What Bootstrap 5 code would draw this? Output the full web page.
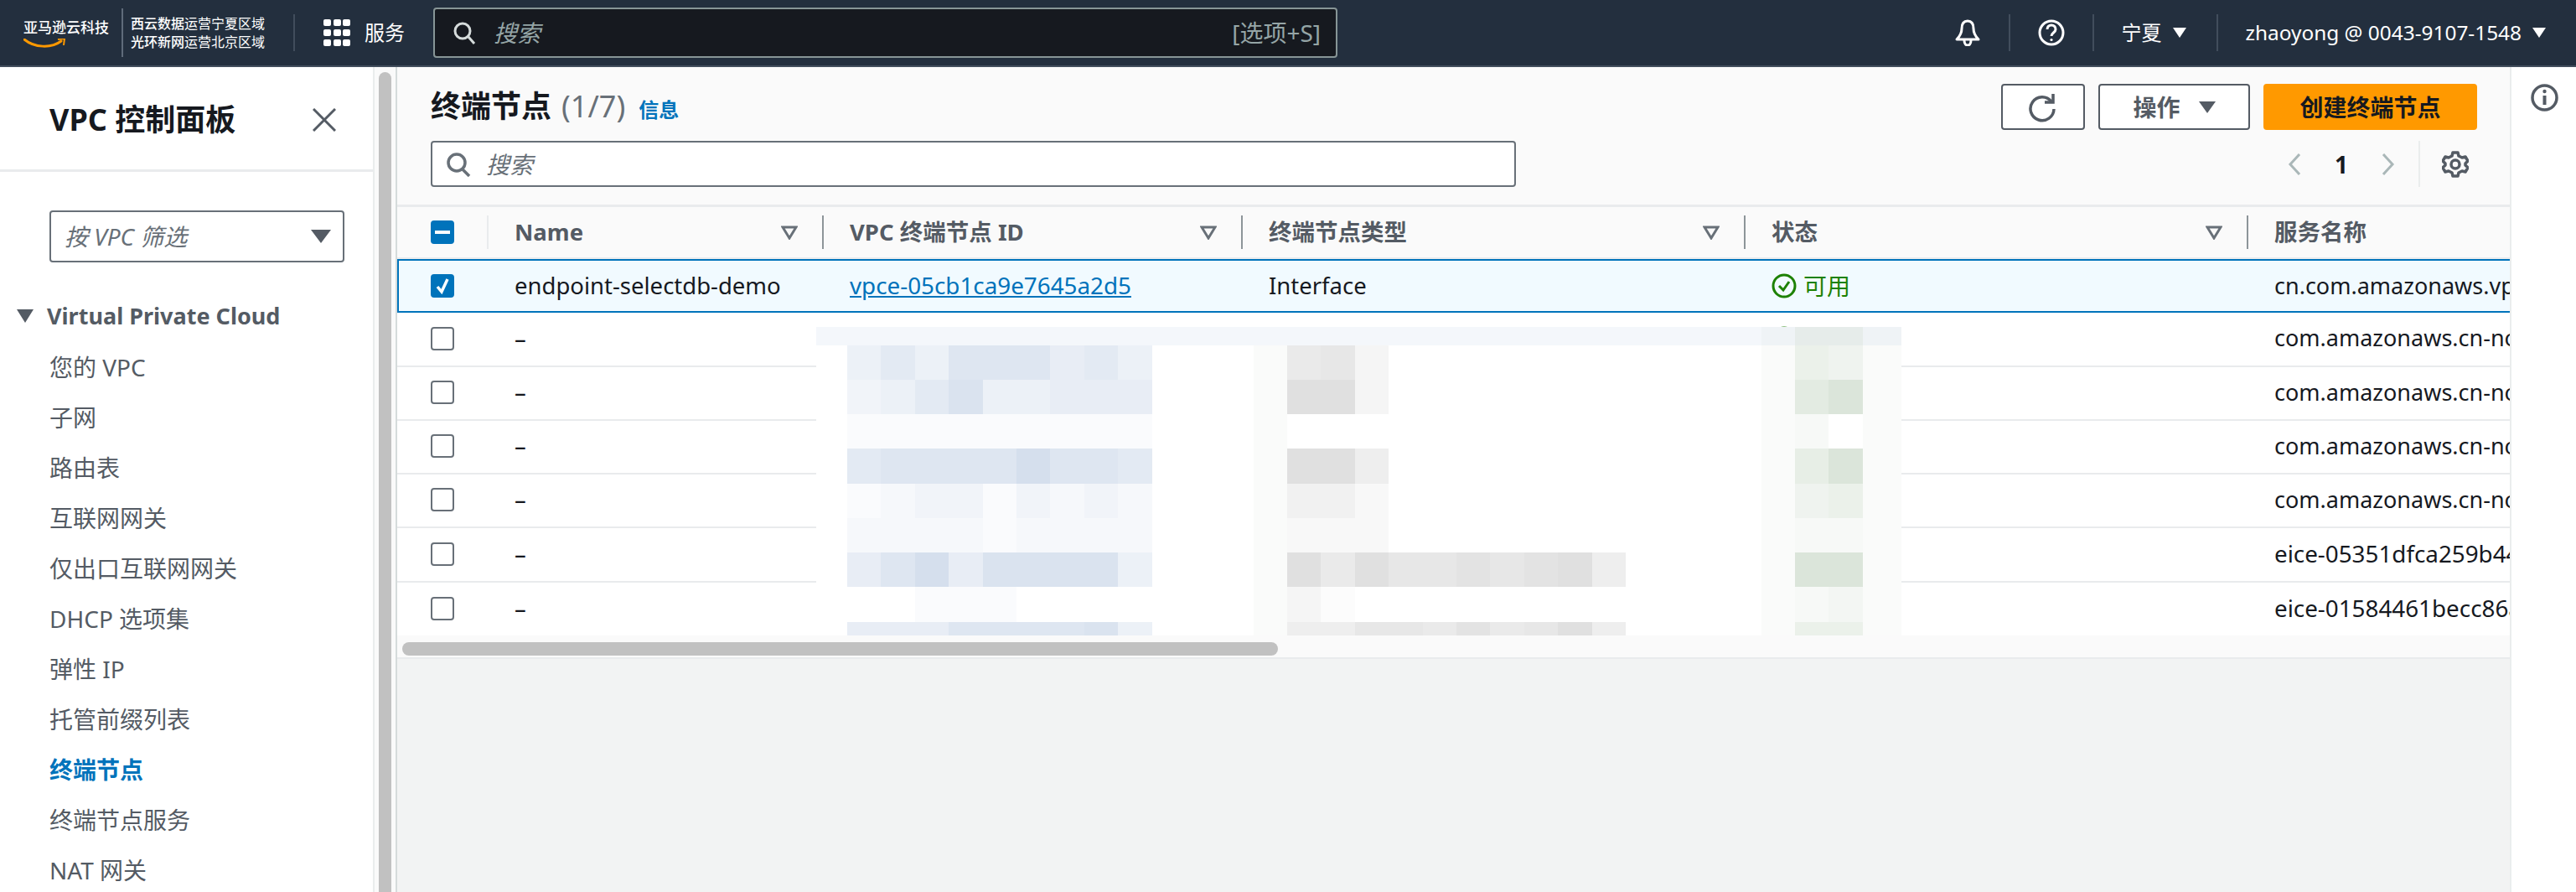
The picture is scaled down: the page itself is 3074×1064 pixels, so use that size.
<!DOCTYPE html>
<html lang="zh">
<head>
  <meta charset="UTF-8" />
  <title>终端节点 | VPC 控制台</title>
  <link href="https://cdn.jsdelivr.net/npm/bootstrap@5.3.0/dist/css/bootstrap.min.css" rel="stylesheet">
  <style>
    html, body { height: 100%; }
    body { width: 3074px; height: 1064px; overflow: hidden; background: #fff; color: #16191f; font-family: "Noto Sans", "Noto Sans CJK SC", sans-serif; font-size: 28px; }

    /* top bar */
    .top-bar { height: 80px; padding: 0; background: #232f3e; border-bottom: 2px solid #414d5c; color: #fff; flex-wrap: nowrap; justify-content: flex-start; }
    .logo-box { width: 145px; padding-left: 28px; margin-top: 2px; }
    .logo-name { font-size: 17px; line-height: 20px; font-weight: 500; white-space: nowrap; }
    .logo-smile { display: block; width: 50px; height: 12px; margin-top: 3px; }
    .region-note { height: 58px; border-left: 2px solid #5f6b7a; padding-left: 9px; font-size: 16px; line-height: 22px; white-space: nowrap; width: 205px; display: flex; flex-direction: column; justify-content: center; }
    .region-note b { font-weight: 500; }
    .bar-sep { width: 2px; height: 44px; background: #414d5c; flex: none; }
    .svc-btn { margin-left: 34px; font-size: 24px; gap: 17px; width: 131px; }
    .top-search { width: 1079px; height: 60px; background: #16191f; border: 2px solid #879596; border-radius: 4px; padding: 0 18px 0 21px; color: #95a5a6; flex: none; }
    .top-search em { font-size: 28px; margin-left: 21px; }
    .top-search .key-hint { font-size: 28px; margin-left: auto; }
    .bar-right { margin-left: auto; height: 100%; }
    .bar-item { padding: 0 33px; font-size: 24px; white-space: nowrap; gap: 13px; }
    .bar-region { padding-right: 36px; }
    .bar-user { padding: 0 36px 0 33px; font-size: 24.4px; }

    /* left nav */
    .work-area { height: 984px; }
    .side-nav { width: 445px; flex: none; overflow: hidden; }
    .side-head { height: 125px; padding: 3px 44px 0 59px; border-bottom: 3px solid #e9ebed; }
    .side-title { font-size: 36px; font-weight: 700; margin: 0; white-space: nowrap; }
    .side-filter { width: 352px; height: 62px; margin: 46px 0 44px 59px; border: 2px solid #687078; border-radius: 4px; padding: 0 14px 0 16px; color: #687078; }
    .side-filter em { font-size: 28px; }
    .side-group { padding-left: 20px; font-weight: 700; color: #545b64; gap: 16px; height: 40px; margin-bottom: 11px; font-size: 27px; white-space: nowrap; }
    .side-link { padding: 0 0 0 59px; height: 60px; line-height: 60px; color: #545b64; font-size: 28px; white-space: nowrap; }
    .side-link.now { color: #0073bb; font-weight: 700; }
    .side-track { width: 29px; flex: none; background: #fafafa; border-left: 2px solid #eaeded; border-right: 2px solid #d5dbdb; padding: 6px 5px 0 5px; }
    .side-thumb { height: 100%; background: #c1c1c1; border-radius: 8px 8px 0 0; }

    /* main column */
    .main-col { width: 2521px; flex: none; background: #f2f3f3; overflow: hidden; }
    .list-head { height: 164px; background: #fafafa; padding: 20px 39px 0 40px; }
    .list-title { font-size: 36px; font-weight: 700; margin: 0; height: 54px; line-height: 54px; white-space: nowrap; }
    .list-title .num { color: #687078; font-weight: 400; margin-left: 12px; }
    .list-title a { font-size: 24px; margin-left: 16px; color: #0073bb; text-decoration: none; }
    .list-search { width: 1295px; height: 55px; margin-top: 14px; background: #fff; border: 2px solid #687078; border-radius: 4px; padding: 0 16px; color: #687078; }
    .list-search em { font-size: 28px; margin-left: 18px; }
    .act-btn { height: 55px; border: 2px solid #545b64; border-radius: 4px; background: #fff; color: #545b64; font-size: 28px; font-weight: 700; padding: 0; display: flex; align-items: center; justify-content: center; }
    .act-refresh { width: 100px; }
    .act-menu { width: 181px; gap: 22px; }
    .act-create { width: 255px; background: #f90; border-color: #f90; color: #16191f; }
    .page-row { height: 55px; margin-top: 13px; }
    .page-num { font-weight: 700; margin: 0 40px; line-height: 1; }
    .page-sep { width: 2px; height: 55px; background: #eaeded; margin: 0 26px 0 28px; }
    .page-row svg:last-child { margin-right: 10px; }

    /* table */
    .list-wrap { background: #fff; border-top: 3px solid #e9ebed; position: relative; }
    .ep-table { table-layout: fixed; width: 2521px; border-collapse: separate; border-spacing: 0; margin: 0; }
    .ep-table th { background: #fafafa; padding: 10px 0; height: 61px; border-bottom: 2px solid #e9ebed; font-weight: 700; color: #545b64; box-shadow: none; }
    .ep-table td { height: 64px; padding: 0 0 2px 33px; border-bottom: 2px solid #e9ebed; white-space: nowrap; overflow: hidden; vertical-align: middle; font-size: 27.5px; background: #fff; color: #16191f; box-shadow: none; }
    .ep-table tbody tr:nth-child(2) td, .ep-table tbody tr:nth-child(6) td, .ep-table tbody tr:nth-child(7) td { height: 65px; }
    .ep-table td.box-cell { padding-left: 40px; }
    .ep-table tr.picked td { background: #f1faff; border-top: 2px solid #0073bb; border-bottom: 2px solid #0073bb; height: 64px; padding-bottom: 0; }
    .ep-table tr.picked td:first-child { border-left: 2px solid #0073bb; padding-left: 38px; }
    .ep-table tr.picked a { color: #0073bb; font-size: 27.8px; }
    .ep-table td.svc-com { font-size: 27px; }
    .ep-table td.svc-eice { font-size: 27.8px; }
    .th-in { height: 40px; border-left: 2px solid #8d9599; padding: 0 29px 0 31px; white-space: nowrap; font-size: 27.5px; }
    .th-in.soft { border-left-color: #e9ebed; }
    .th-box { padding-left: 40px; height: 40px; }
    .chk { display: block; width: 28px; height: 28px; border: 2px solid #687078; border-radius: 4px; background: #fff; }
    .chk.on { background: #0073bb; border-color: #0073bb; }
    .state-ok { color: #1d8102; gap: 8px; font-size: 28px; }
    .blur-over { position: absolute; left: 500px; top: 143px; width: 1295px; height: 372px; background: #fff; display: grid; grid-template-columns: 37px repeat(30, 40.4px) 46px; grid-template-rows: 22px 41px 41px 41px 42px 41px 41px 41px 42px 20px; }
    .list-scroll { height: 28px; background: #fafafa; border-bottom: 2px solid #e9ebed; padding: 8px 0 0 6px; margin-top: -2px; position: relative; }
    .list-thumb { width: 1045px; height: 16px; background: #c1c1c1; border-radius: 8px; }

    /* right tools */
    .tool-rail { flex: 1; background: #fff; border-left: 2px solid #eaeded; padding: 20px 0 0 23px; }
  </style>
</head>
<body>

  <!-- top bar -->
  <nav class="navbar top-bar d-flex align-items-center">
    <div class="logo-box">
      <div class="logo-name">亚马逊云科技</div>
      <svg class="logo-smile" viewBox="0 0 50 12"><path d="M1 1c12 10 32 11 44 2" fill="none" stroke="#f90" stroke-width="3" stroke-linecap="round"/><path d="M41 1l8-1-1 8" fill="none" stroke="#f90" stroke-width="2"/></svg>
    </div>
    <div class="region-note"><div><b>西云数据</b>运营宁夏区域</div><div><b>光环新网</b>运营北京区域</div></div>
    <div class="bar-sep"></div>
    <div class="svc-btn d-flex align-items-center">
      <svg width="32" height="32" viewBox="0 0 32 32" fill="#fff" class="flex-none"><rect x="0" y="0" width="9" height="8" rx="2"/><rect x="12" y="0" width="9" height="8" rx="2"/><rect x="23" y="0" width="9" height="8" rx="2"/><rect x="0" y="12" width="9" height="8" rx="2"/><rect x="12" y="12" width="9" height="8" rx="2"/><rect x="23" y="12" width="9" height="8" rx="2"/><rect x="0" y="24" width="9" height="8" rx="2"/><rect x="12" y="24" width="9" height="8" rx="2"/><rect x="23" y="24" width="9" height="8" rx="2"/></svg>
      <span>服务</span>
    </div>
    <div class="top-search d-flex align-items-center">
      <svg width="28" height="28" viewBox="0 0 28 28" fill="none" stroke="#d5dbdb" stroke-width="3"><circle cx="12" cy="12" r="9"/><path d="M19 19l7 8"/></svg>
      <em>搜索</em>
      <span class="key-hint">[选项+S]</span>
    </div>
    <div class="bar-right d-flex align-items-center">
      <div class="bar-item d-flex align-items-center">
        <svg width="32" height="32" viewBox="0 0 32 32" fill="none" stroke="#fff" stroke-width="3" stroke-linejoin="round"><path d="M16 2c-5 0-7 4-7 9 0 6-2 9-6 13h26c-4-4-6-7-6-13 0-5-2-9-7-9z"/><path d="M12 25c0 4 2 6 4 6s4-2 4-6"/></svg>
      </div>
      <div class="bar-sep"></div>
      <div class="bar-item d-flex align-items-center">
        <svg width="32" height="32" viewBox="0 0 32 32" fill="none" stroke="#fff" stroke-width="3"><circle cx="16" cy="16" r="14"/><path d="M11 12c0-3 2-5 5-5s5 2 5 5c0 4-5 4-5 8" /><circle cx="16" cy="24.5" r="1.6" fill="#fff" stroke="none"/></svg>
      </div>
      <div class="bar-sep"></div>
      <div class="bar-item bar-region d-flex align-items-center">
        <span>宁夏</span>
        <svg width="16" height="12" viewBox="0 0 16 12" fill="#fff"><path d="M0 0h16L8 12z"/></svg>
      </div>
      <div class="bar-sep"></div>
      <div class="bar-item bar-user d-flex align-items-center">
        <span>zhaoyong @ 0043-9107-1548</span>
        <svg width="16" height="12" viewBox="0 0 16 12" fill="#fff"><path d="M0 0h16L8 12z"/></svg>
      </div>
    </div>
  </nav>

  <div class="work-area d-flex">
    <!-- left nav -->
    <aside class="side-nav">
      <div class="side-head d-flex align-items-center justify-content-between">
        <h2 class="side-title">VPC 控制面板</h2>
        <svg width="28" height="28" viewBox="0 0 28 28" fill="none" stroke="#545b64" stroke-width="3"><path d="M1 1l26 26M27 1L1 27"/></svg>
      </div>
      <div class="side-filter d-flex align-items-center justify-content-between">
        <em>按 VPC 筛选</em>
        <svg width="24" height="16" viewBox="0 0 24 16" fill="#545b64"><path d="M0 0h24L12 16z"/></svg>
      </div>
      <div class="side-group d-flex align-items-center">
        <svg width="20" height="16" viewBox="0 0 20 16" fill="#545b64"><path d="M0 0h20L10 16z"/></svg>
        <span>Virtual Private Cloud</span>
      </div>
      <div class="nav flex-column">
        <a class="nav-link side-link" href="#">您的 VPC</a>
        <a class="nav-link side-link" href="#">子网</a>
        <a class="nav-link side-link" href="#">路由表</a>
        <a class="nav-link side-link" href="#">互联网网关</a>
        <a class="nav-link side-link" href="#">仅出口互联网网关</a>
        <a class="nav-link side-link" href="#">DHCP 选项集</a>
        <a class="nav-link side-link" href="#">弹性 IP</a>
        <a class="nav-link side-link" href="#">托管前缀列表</a>
        <a class="nav-link side-link now" href="#">终端节点</a>
        <a class="nav-link side-link" href="#">终端节点服务</a>
        <a class="nav-link side-link" href="#">NAT 网关</a>
      </div>
    </aside>
    <div class="side-track"><div class="side-thumb"></div></div>

    <!-- main -->
    <main class="main-col">
      <div class="list-head d-flex justify-content-between">
        <div>
          <h1 class="list-title">终端节点<span class="num">(1/7)</span><a href="#">信息</a></h1>
          <div class="list-search d-flex align-items-center">
            <svg width="30" height="30" viewBox="0 0 30 30" fill="none" stroke="#687078" stroke-width="3.5"><circle cx="13" cy="13" r="10"/><path d="M20 21l8 8"/></svg>
            <em>搜索</em>
          </div>
        </div>
        <div>
          <div class="d-flex gap-3">
            <button class="act-btn act-refresh" type="button" aria-label="刷新">
              <svg width="34" height="44" viewBox="0 0 34 44" fill="none" stroke="#545b64" stroke-width="3.5"><path d="M27 15a14 14 0 1 0 3 9"/><path d="M29 6v10H19"/></svg>
            </button>
            <button class="act-btn act-menu" type="button">操作
              <svg width="20" height="14" viewBox="0 0 20 14" fill="#545b64"><path d="M0 0h20L10 14z"/></svg>
            </button>
            <button class="act-btn act-create" type="button">创建终端节点</button>
          </div>
          <div class="page-row d-flex align-items-center justify-content-end">
            <svg width="16" height="26" viewBox="0 0 16 26" fill="none" stroke="#aab7b8" stroke-width="3"><path d="M14 1L3 13l11 12"/></svg>
            <span class="page-num">1</span>
            <svg width="16" height="26" viewBox="0 0 16 26" fill="none" stroke="#aab7b8" stroke-width="3"><path d="M2 1l11 12L2 25"/></svg>
            <div class="page-sep"></div>
            <svg width="32" height="32" viewBox="0 0 32 32" fill="none" stroke="#545b64" stroke-width="3.5" stroke-linejoin="round"><circle cx="16" cy="16" r="5"/><path d="M13 2h6l1 4 4 2 4-1 3 5-3 3v2l3 3-3 5-4-1-4 2-1 4h-6l-1-4-4-2-4 1-3-5 3-3v-2l-3-3 3-5 4 1 4-2z"/></svg>
          </div>
        </div>
      </div>

      <div class="list-wrap">
        <table class="table ep-table">
          <colgroup><col style="width:107px"><col style="width:400px"><col style="width:500px"><col style="width:600px"><col style="width:600px"><col style="width:314px"></colgroup>
          <thead>
            <tr>
              <th><div class="th-box d-flex align-items-center"><span class="chk on d-flex align-items-center justify-content-center"><svg width="18" height="4" viewBox="0 0 18 4" fill="#fff"><rect width="18" height="4"/></svg></span></div></th>
              <th><div class="th-in soft d-flex align-items-center justify-content-between"><span>Name</span><svg width="20" height="17" viewBox="0 0 20 17" fill="none" stroke="#687078" stroke-width="3"><path d="M2 2h16l-8 13z"/></svg></div></th>
              <th><div class="th-in d-flex align-items-center justify-content-between"><span>VPC 终端节点 ID</span><svg width="20" height="17" viewBox="0 0 20 17" fill="none" stroke="#687078" stroke-width="3"><path d="M2 2h16l-8 13z"/></svg></div></th>
              <th><div class="th-in d-flex align-items-center justify-content-between"><span>终端节点类型</span><svg width="20" height="17" viewBox="0 0 20 17" fill="none" stroke="#687078" stroke-width="3"><path d="M2 2h16l-8 13z"/></svg></div></th>
              <th><div class="th-in d-flex align-items-center justify-content-between"><span>状态</span><svg width="20" height="17" viewBox="0 0 20 17" fill="none" stroke="#687078" stroke-width="3"><path d="M2 2h16l-8 13z"/></svg></div></th>
              <th><div class="th-in d-flex align-items-center"><span>服务名称</span></div></th>
            </tr>
          </thead>
          <tbody>
            <tr class="picked">
              <td class="box-cell"><span class="chk on d-flex align-items-center justify-content-center"><svg width="18" height="20" viewBox="0 0 18 20" fill="none" stroke="#fff" stroke-width="3.5"><path d="M3 11l5 6 7-15"/></svg></span></td>
              <td>endpoint-selectdb-demo</td>
              <td><a href="#">vpce-05cb1ca9e7645a2d5</a></td>
              <td>Interface</td>
              <td><div class="state-ok d-flex align-items-center"><svg width="30" height="30" viewBox="0 0 30 30" fill="none" stroke="#1d8102" stroke-width="3"><circle cx="15" cy="15" r="13"/><path d="M9 15l5 5 7-10"/></svg><span>可用</span></div></td>
              <td class="svc-com">cn.com.amazonaws.vpce.cn-northwest-1</td>
            </tr>
            <tr>
              <td class="box-cell"><span class="chk"></span></td><td>–</td><td></td><td></td>
              <td><div class="state-ok d-flex align-items-center"><svg width="30" height="30" viewBox="0 0 30 30" fill="none" stroke="#1d8102" stroke-width="3"><circle cx="15" cy="15" r="13"/></svg></div></td>
              <td class="svc-com">com.amazonaws.cn-northwest-1.s3</td>
            </tr>
            <tr><td class="box-cell"><span class="chk"></span></td><td>–</td><td></td><td></td><td></td><td class="svc-com">com.amazonaws.cn-northwest-1.ec2</td></tr>
            <tr><td class="box-cell"><span class="chk"></span></td><td>–</td><td></td><td></td><td></td><td class="svc-com">com.amazonaws.cn-northwest-1.ssm</td></tr>
            <tr><td class="box-cell"><span class="chk"></span></td><td>–</td><td></td><td></td><td></td><td class="svc-com">com.amazonaws.cn-northwest-1.sts</td></tr>
            <tr><td class="box-cell"><span class="chk"></span></td><td>–</td><td></td><td></td><td></td><td class="svc-eice">eice-05351dfca259b44e0</td></tr>
            <tr><td class="box-cell"><span class="chk"></span></td><td>–</td><td></td><td></td><td></td><td class="svc-eice">eice-01584461becc86a12</td></tr>
          </tbody>
        </table>
        <div class="blur-over" id="blurOver" aria-hidden="true"></div>
      </div>
      <div class="list-scroll"><div class="list-thumb"></div></div>
    </main>

    <!-- right tools -->
    <div class="tool-rail">
      <svg class="d-block" width="33" height="33" viewBox="0 0 33 33" fill="none" stroke="#545b64" stroke-width="3.5"><circle cx="16.5" cy="16.5" r="14.5"/><path d="M16.5 14v11" stroke-width="4"/><circle cx="16.5" cy="9" r="2.2" fill="#545b64" stroke="none"/></svg>
    </div>
  </div>

  <script src="https://cdn.jsdelivr.net/npm/bootstrap@5.3.0/dist/js/bootstrap.bundle.min.js"></script>
  <script>
    // pixelated block over the hidden columns, values 0-9 are how strong each tile is
    const mosaic = [
      null,
      { b: "464777564", g: "673", s: "54" },
      { b: "346844555", g: "993", s: "79" },
      { b: "111111111", g: "000", s: "20" },
      { b: "677779776", g: "995", s: "69" },
      { b: "123313232", g: "442", s: "45" },
      { b: "222212222", g: "222", s: "22" },
      { b: "579588884", g: "96977878" + "95", s: "99" },
      { b: "001110000", g: "310000000" + "0", s: "23" },
      { b: "555777784", g: "55776867" + "95", s: "55" }
    ];
    function mix(base, v) {
      const k = v / 9;
      return "rgb(" + base.map(c => Math.round(255 + (c - 255) * k)).join(",") + ")";
    }
    const BLUE = [213, 223, 237], GREY = [224, 224, 224], GREEN = [219, 229, 218];
    const over = document.getElementById("blurOver");
    mosaic.forEach(row => {
      for (let i = 0; i < 32; i++) {
        const cell = document.createElement("div");
        let bg = "#fff";
        if (!row) {
          bg = i >= 28 ? (i === 29 || i === 30 ? "#e6ecea" : "#eff3f6") : "#f4f7fb";
        } else if (i >= 1 && i <= 9) {
          bg = mix(BLUE, +row.b[i - 1]);
        } else if (i === 13 || i === 28 || i === 31) {
          bg = "#fafbfa";
        } else if (i >= 14 && i - 14 < row.g.length) {
          bg = mix(GREY, +row.g[i - 14]);
        } else if (i === 29 || i === 30) {
          bg = mix(GREEN, +row.s[i - 29]);
        }
        cell.style.background = bg;
        over.appendChild(cell);
      }
    });
  </script>
</body>
</html>
